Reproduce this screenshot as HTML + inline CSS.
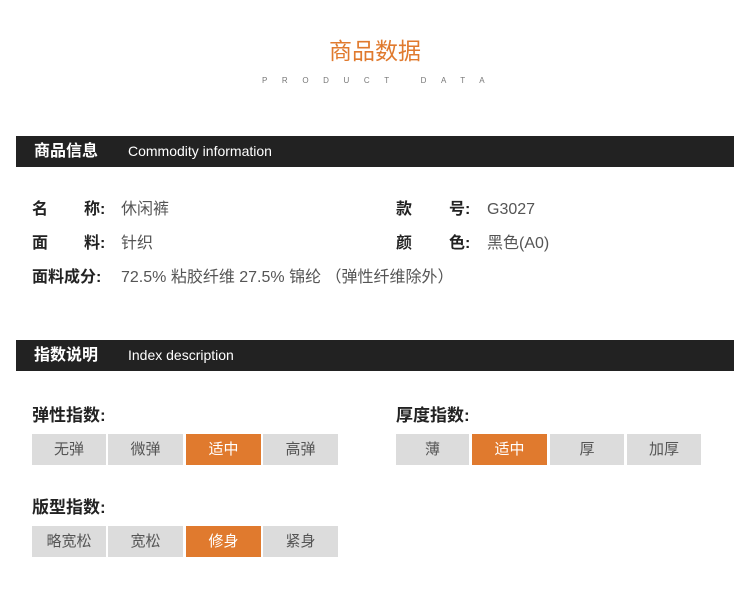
<!DOCTYPE html>
<html><head><meta charset="utf-8"><style>
*{margin:0;padding:0;box-sizing:border-box}
body{width:750px;height:598px;background:#fff;position:relative;overflow:hidden;font-family:"Liberation Sans","Noto Sans CJK SC",sans-serif}
.a{position:absolute;white-space:nowrap;line-height:20px}
.t{left:0;width:750px;text-align:center;top:39px;font-size:23px;line-height:24px;color:#e07a2e;font-weight:normal}
.s{left:262px;top:76px;font-size:8px;line-height:10px;letter-spacing:14.6px;color:#777}
.bar{position:absolute;left:16px;width:718px;height:31px;background:#222;color:#fff}
.bar b{position:absolute;left:18px;top:0;line-height:31px;font-size:16px;font-weight:bold}
.bar span{position:absolute;left:112px;top:0;line-height:31px;font-size:14px}
.l{font-size:16px;font-weight:bold;color:#222}
.v{font-size:16px;color:#555}
.btn{position:absolute;height:31px;background:#dcdcdc;color:#555;font-size:15px;text-align:center;line-height:31px}
.o{background:#e07a2e;color:#fff}
.h{font-size:17px;font-weight:bold;color:#222}
</style></head><body>
<div class="a t">商品数据</div>
<div class="a s">PRODUCT&nbsp;DATA</div>
<div class="bar" style="top:136px"><b>商品信息</b><span>Commodity information</span></div>
<div class="a l" style="left:32px;top:200px">名</div><div class="a l" style="left:84px;top:200px">称:</div><div class="a v" style="left:121px;top:200px">休闲裤</div>
<div class="a l" style="left:396px;top:200px">款</div><div class="a l" style="left:449px;top:200px">号:</div><div class="a v" style="left:487px;top:200px">G3027</div>
<div class="a l" style="left:32px;top:234px">面</div><div class="a l" style="left:84px;top:234px">料:</div><div class="a v" style="left:121px;top:234px">针织</div>
<div class="a l" style="left:396px;top:234px">颜</div><div class="a l" style="left:449px;top:234px">色:</div><div class="a v" style="left:487px;top:234px">黑色(A0)</div>
<div class="a l" style="left:32px;top:268px">面料成分:</div><div class="a v" style="left:121px;top:268px">72.5% 粘胶纤维 27.5% 锦纶 （弹性纤维除外）</div>
<div class="bar" style="top:340px"><b>指数说明</b><span>Index description</span></div>
<div class="a h" style="left:32px;top:406px">弹性指数:</div>
<div class="a h" style="left:396px;top:406px">厚度指数:</div>
<div class="btn" style="left:32px;top:434px;width:74px">无弹</div>
<div class="btn" style="left:108px;top:434px;width:75px">微弹</div>
<div class="btn o" style="left:186px;top:434px;width:75px">适中</div>
<div class="btn" style="left:263px;top:434px;width:75px">高弹</div>
<div class="btn" style="left:396px;top:434px;width:73px">薄</div>
<div class="btn o" style="left:472px;top:434px;width:75px">适中</div>
<div class="btn" style="left:550px;top:434px;width:74px">厚</div>
<div class="btn" style="left:627px;top:434px;width:74px">加厚</div>
<div class="a h" style="left:32px;top:498px">版型指数:</div>
<div class="btn" style="left:32px;top:526px;width:74px">略宽松</div>
<div class="btn" style="left:108px;top:526px;width:75px">宽松</div>
<div class="btn o" style="left:186px;top:526px;width:75px">修身</div>
<div class="btn" style="left:263px;top:526px;width:75px">紧身</div>
</body></html>
